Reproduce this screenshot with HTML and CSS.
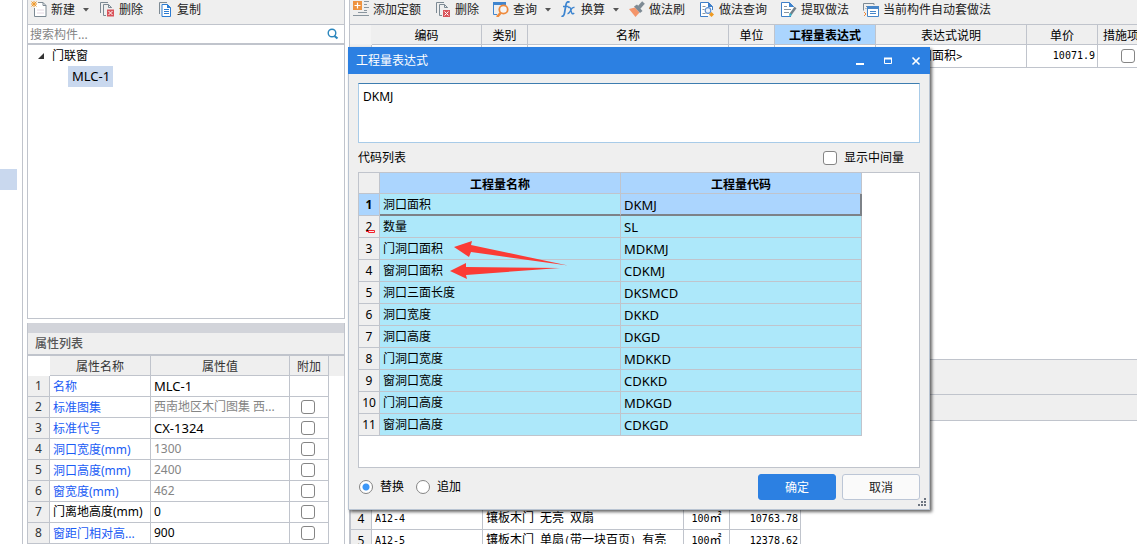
FILE: index.html
```html
<!DOCTYPE html>
<html lang="zh-CN">
<head>
<meta charset="utf-8">
<title>工程量表达式</title>
<link rel="stylesheet" href="styles.css">
</head>
<body>
<div class="app">
  <nav class="rail"><span class="rail-mark"></span></nav>

  <aside class="side">
    <section class="components">
      <div class="toolbar">
        <button class="tool has-menu" type="button">
          <svg class="icon" viewBox="0 0 16 16"><path d="M7 1.500h5l3 3v11H3.500V7" fill="#fff" stroke="#7d8a94"/><path d="M12 1.500v3h3" fill="none" stroke="#7d8a94"/><path d="M6 9h7M6 12h7" stroke="#e4d8e2"/><path d="M3 0v6M0 3h6M.500 .500l5 5M5.500 .500l-5 5" stroke="#f09a2c"/></svg>
          新建
          <svg class="caret" viewBox="0 0 6 4"><path d="M0 0h6L3 3.500z" fill="#555"/></svg>
        </button>
        <button class="tool" type="button">
          <svg class="icon" viewBox="0 0 16 16"><path d="M1.500 12V1.500H9" fill="none" stroke="#7d8a94"/><path d="M7 14.500H4.500v-11h5l3 3V7M9.500 3.500v3h3" fill="none" stroke="#7d8a94"/><path d="M8 8.500h7v7H8z" fill="#d9535a"/><path d="M9.500 10l4 4M13.500 10l-4 4" stroke="#fff"/></svg>
          删除
        </button>
        <button class="tool" type="button">
          <svg class="icon" viewBox="0 0 16 16"><path d="M2.500 13V1.500H10" fill="none" stroke="#7d8a94"/><path d="M5 3.500h5.500l3 3v9H5z" fill="#fff" stroke="#2c7cd2"/><path d="M10 3v4h4z" fill="#2c7cd2"/><path d="M7 8.500h5M7 10.500h5M7 12.500h5" stroke="#2c7cd2"/></svg>
          复制
        </button>
      </div>
      <div class="search">
        <input type="text" placeholder="搜索构件..." aria-label="搜索构件">
        <button type="button" aria-label="搜索"><svg viewBox="0 0 12 12"><circle cx="5" cy="5" r="3.800" fill="none" stroke="#2b86bd" stroke-width="1.400"/><path d="M7.500 8l3 2.500" stroke="#2b86bd" stroke-width="2.200"/></svg></button>
      </div>
      <ul class="tree">
        <li class="tree-parent"><svg class="twisty" viewBox="0 0 6 6"><path d="M6 0v6H0z" fill="#333"/></svg>门联窗</li>
        <li class="tree-child"><span class="selected latin">MLC-1</span></li>
      </ul>
    </section>

    <section class="props">
      <div class="splitter"></div>
      <h2 class="props-title">属性列表</h2>
      <div class="props-body">
      <table class="props-table">
        <colgroup><col class="c-num"><col class="c-name"><col class="c-value"><col class="c-extra"><col></colgroup>
        <thead><tr><th class="corner"></th><th>属性名称</th><th>属性值</th><th>附加</th><th class="rest"></th></tr></thead>
        <tbody>
          <tr><th>1</th><td class="link">名称</td><td class="latin">MLC-1</td><td></td><td class="rest"></td></tr>
          <tr><th>2</th><td class="link">标准图集</td><td class="muted">西南地区木门图集 西...</td><td class="tick"><input type="checkbox" aria-label="附加 标准图集"></td><td class="rest"></td></tr>
          <tr><th>3</th><td class="link">标准代号</td><td class="latin">CX-1324</td><td class="tick"><input type="checkbox" aria-label="附加 标准代号"></td><td class="rest"></td></tr>
          <tr><th>4</th><td class="link">洞口宽度(mm)</td><td class="muted">1300</td><td class="tick"><input type="checkbox" aria-label="附加 洞口宽度"></td><td class="rest"></td></tr>
          <tr><th>5</th><td class="link">洞口高度(mm)</td><td class="muted">2400</td><td class="tick"><input type="checkbox" aria-label="附加 洞口高度"></td><td class="rest"></td></tr>
          <tr><th>6</th><td class="link">窗宽度(mm)</td><td class="muted">462</td><td class="tick"><input type="checkbox" aria-label="附加 窗宽度"></td><td class="rest"></td></tr>
          <tr><th>7</th><td>门离地高度(mm)</td><td>0</td><td class="tick"><input type="checkbox" aria-label="附加 门离地高度"></td><td class="rest"></td></tr>
          <tr><th>8</th><td class="link">窗距门相对高...</td><td>900</td><td class="tick"><input type="checkbox" aria-label="附加 窗距门相对高"></td><td class="rest"></td></tr>
        </tbody>
      </table>
      </div>
    </section>
  </aside>

  <main class="main">
    <div class="toolbar">
      <button class="tool" type="button">
        <svg class="icon" viewBox="0 0 16 16"><path d="M0 0h9v9H0z" fill="#ee9340"/><path d="M4.500 1.500v6M1.500 4.500h6" stroke="#fff" stroke-width="1.200"/><path d="M11 .500h5M11 3.500h3M11 6.500h5M11 9.500h3M5 11.500h9M0 14.500h16" stroke="#8a969f"/></svg>
        添加定额
      </button>
      <button class="tool" type="button">
        <svg class="icon" viewBox="0 0 16 16"><path d="M1.500 12V1.500H9" fill="none" stroke="#7d8a94"/><path d="M7 14.500H4.500v-11h5l3 3V7M9.500 3.500v3h3" fill="none" stroke="#7d8a94"/><path d="M8 9h7v7H8z" fill="#d9535a"/><path d="M9.500 10.500l4 4M13.500 10.500l-4 4" stroke="#fff"/></svg>
        删除
      </button>
      <button class="tool has-menu" type="button">
        <svg class="icon" viewBox="0 0 16 16"><path d="M4 13.500H.500V2.500h12V4" fill="none" stroke="#3f85cf"/><path d="M0 1h13v3H0z" fill="#3f85cf"/><circle cx="10.500" cy="8.500" r="4.200" fill="#f4f4f4" stroke="#ee8a3c" stroke-width="1.800"/><path d="M7.500 12l-3.500 4" stroke="#ee8a3c" stroke-width="2.600"/></svg>
        查询
        <svg class="caret" viewBox="0 0 6 4"><path d="M0 0h6L3 3.500z" fill="#555"/></svg>
      </button>
      <button class="tool has-menu" type="button">
        <svg class="icon" viewBox="0 0 16 16"><path d="M8.500 1.500C7 0 5.500 1 5 3.500L3.500 12c-.500 3-1.800 3.800-3 2.800M2 5.500h5.500" fill="none" stroke="#3d85d0" stroke-width="1.700"/><path d="M7 6.500c2-1 2.500 .500 3 3s1.200 4.500 3.200 2.500M13.500 6.500c-2-.700-3 1-3.800 2.800S8 13 6.500 12.500" fill="none" stroke="#3d85d0" stroke-width="1.400"/></svg>
        换算
        <svg class="caret" viewBox="0 0 6 4"><path d="M0 0h6L3 3.500z" fill="#555"/></svg>
      </button>
      <button class="tool" type="button">
        <svg class="icon" viewBox="0 0 16 16"><path d="M0 8l6-1.500 4.500 5L6.500 16z" fill="#f4956a"/><path d="M5 5.500l3-2 5.500 6.500-2.500 2z" fill="#7d8a94"/><path d="M10 6.500l4.500-5" stroke="#7d8a94" stroke-width="3.600"/></svg>
        做法刷
      </button>
      <button class="tool" type="button">
        <svg class="icon" viewBox="0 0 16 16"><path d="M9 15.500H1.500v-14h8l4 4V9" fill="#fff" stroke="#3f7fc8"/><path d="M9 1v5h5z" fill="#3f7fc8"/><path d="M3.500 5.500h3M3.500 8.500h2M3.500 12.500h3" stroke="#8a969f"/><circle cx="9" cy="9.500" r="2.800" fill="#eef3fa" stroke="#5d8fcf" stroke-width="1.200"/><path d="M12.500 11l2.500 2.500-2.500 2.500-2.500-2.500z" fill="#ee9a22"/></svg>
        做法查询
      </button>
      <button class="tool" type="button">
        <svg class="icon" viewBox="0 0 16 16"><path d="M10 15.500H.500v-14h8l4 4V6" fill="#fff" stroke="#3f7fc8"/><path d="M8 1v5h5z" fill="#3f85cf"/><path d="M3 5.500h3M3 8.500h7M3 11.500h5" stroke="#8a969f"/><path d="M14.500 6.500L9 14" stroke="#71808b" stroke-width="2.500"/><path d="M9 12l2 2-3 1.500z" fill="#2dbbd0"/></svg>
        提取做法
      </button>
      <button class="tool" type="button">
        <svg class="icon" viewBox="0 0 16 16"><path d="M.500 9.500V2.500h10.500V4M3 5.500h1M2.500 7.500h1" fill="none" stroke="#7d8a94"/><path d="M4.500 6h11v9.500h-11z" fill="#fff" stroke="#4786c9"/><path d="M4 5h12v3H4z" fill="#4786c9"/><path d="M7 10.500h6M7 12.500h6" stroke="#4786c9"/><path d="M1 11l2 2-2 2" fill="none" stroke="#ee8a3c"/></svg>
        当前构件自动套做法
      </button>
    </div>

    <div class="sheet">
      <table class="quota">
        <colgroup><col class="q-num"><col class="q-code"><col class="q-kind"><col class="q-name"><col class="q-unit"><col class="q-expr"><col class="q-desc"><col class="q-price"><col class="q-measure"></colgroup>
        <thead><tr><th class="corner"></th><th>编码</th><th>类别</th><th>名称</th><th>单位</th><th class="current">工程量表达式</th><th>表达式说明</th><th>单价</th><th>措施项目</th></tr></thead>
        <tbody><tr><th></th><td></td><td></td><td></td><td></td><td></td><td><span class="mono">DKMJ&lt;</span>洞口面积<span class="mono">&gt;</span></td><td class="number mono">10071.9</td><td class="tick"><input type="checkbox" aria-label="措施项目"></td></tr></tbody>
      </table>
    </div>

    <div class="band"></div>
    <div class="band band-low"></div>

    <div class="lookup">
      <table class="norms">
        <colgroup><col class="n-num"><col class="n-code"><col class="n-name"><col class="n-unit"><col class="n-price"></colgroup>
        <thead><tr><th></th><th></th><th></th><th></th><th></th></tr></thead>
        <tbody>
          <tr><th></th><td></td><td></td><td></td><td></td></tr>
          <tr><th></th><td></td><td></td><td></td><td></td></tr>
          <tr><th></th><td></td><td></td><td></td><td></td></tr>
          <tr><th>4</th><td class="mono">A12-4</td><td>镶板木门<span class="mono"> </span>无亮<span class="mono"> </span>双扇</td><td class="unit"><span class="mono">100</span>㎡</td><td class="number mono">10763.78</td></tr>
          <tr><th>5</th><td class="mono">A12-5</td><td>镶板木门<span class="mono"> </span>单扇<span class="mono">(</span>带一块百页<span class="mono">) </span>有亮</td><td class="unit"><span class="mono">100</span>㎡</td><td class="number mono">12378.62</td></tr>
        </tbody>
      </table>
    </div>
  </main>
</div>

<div class="dialog" role="dialog" aria-labelledby="dialog-title">
  <header class="dialog-head">
    <h1 id="dialog-title">工程量表达式</h1>
    <button type="button" aria-label="最小化"><svg viewBox="0 0 10 10"><path d="M1 8h8" stroke="#fff" stroke-width="2"/></svg></button>
    <button type="button" aria-label="最大化"><svg viewBox="0 0 10 10"><path d="M1.500 2.500h7v5h-7z" fill="none" stroke="#fff"/><path d="M1 2.500h8" stroke="#fff" stroke-width="2"/></svg></button>
    <button type="button" aria-label="关闭"><svg viewBox="0 0 10 10"><path d="M1.500 1.500l7 7M8.500 1.500l-7 7" stroke="#fff" stroke-width="1.600"/></svg></button>
  </header>
  <div class="dialog-body">
    <textarea class="expression" aria-label="表达式">DKMJ</textarea>
    <div class="list-head">
      <span>代码列表</span>
      <label><input type="checkbox">显示中间量</label>
    </div>
    <div class="codes-box">
      <table class="codes">
        <colgroup><col class="k-num"><col class="k-name"><col class="k-code"></colgroup>
        <thead><tr><th class="corner"></th><th>工程量名称</th><th>工程量代码</th></tr></thead>
        <tbody>
          <tr class="active"><th>1</th><td>洞口面积</td><td class="latin">DKMJ</td></tr>
          <tr><th>2</th><td>数量</td><td class="latin">SL</td></tr>
          <tr><th>3</th><td>门洞口面积</td><td class="latin">MDKMJ</td></tr>
          <tr><th>4</th><td>窗洞口面积</td><td class="latin">CDKMJ</td></tr>
          <tr><th>5</th><td>洞口三面长度</td><td class="latin">DKSMCD</td></tr>
          <tr><th>6</th><td>洞口宽度</td><td class="latin">DKKD</td></tr>
          <tr><th>7</th><td>洞口高度</td><td class="latin">DKGD</td></tr>
          <tr><th>8</th><td>门洞口宽度</td><td class="latin">MDKKD</td></tr>
          <tr><th>9</th><td>窗洞口宽度</td><td class="latin">CDKKD</td></tr>
          <tr><th>10</th><td>门洞口高度</td><td class="latin">MDKGD</td></tr>
          <tr><th>11</th><td>窗洞口高度</td><td class="latin">CDKGD</td></tr>
        </tbody>
      </table>
      <svg class="marks" viewBox="0 0 220 60">
        <path d="M95 27L113 21L112 25L209 45.500L112 32L110 37Z" fill="#fb3b35"/>
        <path d="M91 51L107 43L107 47L201 48L107 55L108 59Z" fill="#fb3b35"/>
        <path d="M7 11.500h3M9.500 10.500h6v2h-6z" fill="none" stroke="#f3212d"/>
      </svg>
    </div>
    <footer class="dialog-foot">
      <label><input type="radio" name="mode" checked>替换</label>
      <label><input type="radio" name="mode">追加</label>
      <button class="btn primary" type="button">确定</button>
      <button class="btn" type="button">取消</button>
    </footer>
  </div>
  <svg class="grip" viewBox="0 0 8 8"><path d="M6 0h2v2H6zM3 3h2v2H3zM6 3h2v2H6zM0 6h2v2H0zM3 6h2v2H3zM6 6h2v2H6z" fill="#6d7580"/></svg>
</div>
</body>
</html>
```
FILE: styles.css
```css
* { box-sizing: border-box; }

:root {
  --line: #c0c4cc;
  --panel: #efefef;
  --pick: #abd5fe;
  --cyan: #ade8fa;
  --blue: #2c80e2;
}

body {
  margin: 0;
  height: 100vh;
  overflow: hidden;
  background: #fff;
  color: #000;
  font: 12px/18px "Noto Sans", "Noto Sans CJK SC", sans-serif;
}

button, input, textarea { font: inherit; color: inherit; }
button { border: 0; padding: 0; background: none; }
svg { display: block; flex: none; }

.latin { font-size: 13px; }
.mono { font-family: "DejaVu Sans Mono", monospace; font-size: 10px; white-space: pre; }

.app { display: flex; height: 100%; }

.rail {
  flex: none;
  width: 23px;
  padding-top: 169px;
  border-right: 1px solid var(--line);
}
.rail-mark { display: block; width: 17px; height: 21px; background: #c9d8ee; }

.side {
  flex: none;
  display: flex;
  flex-direction: column;
  gap: 4px;
  width: 318px;
  margin: 0 4px;
}

.toolbar {
  flex: none;
  display: flex;
  align-items: center;
  gap: 14px;
  height: 25px;
  padding: 0 3px 4px;
  background: var(--panel);
  border-bottom: 1px solid var(--line);
}
.tool { display: flex; align-items: center; flex: none; white-space: nowrap; color: #222; }
.has-menu { margin-right: -4px; }
.icon { width: 16px; height: 16px; margin: 0 4px 2px 0; }
.caret { width: 6px; height: 4px; margin-left: 8px; }

.components { display: flex; flex-direction: column; height: 319px; border: 1px solid var(--line); border-top: 0; }
.search { display: flex; align-items: center; height: 20px; border-bottom: 2px solid var(--line); }
.search input { flex: 1; min-width: 0; border: 0; padding: 1px 2px 0; outline: 0; background: none; }
.search input::placeholder { color: #858585; opacity: 1; }
.search svg { width: 12px; height: 12px; margin-right: 5px; }

.tree { margin: 0; padding: 0; list-style: none; line-height: 21px; }
.tree-parent { display: flex; align-items: center; padding-left: 10px; }
.twisty { width: 6px; height: 6px; margin-right: 8px; }
.tree-child { display: flex; padding-left: 40px; }
.selected { padding: 0 3px 0 4px; background: #c9d8ee; }

.props { flex: 1; min-height: 0; overflow: hidden; border: 1px solid var(--line); border-width: 0 1px; }
.splitter { height: 10px; background: #d2d4da; }
.props-title {
  margin: 0;
  height: 23px;
  padding: 0 7px;
  background: var(--panel);
  border-bottom: 2px solid var(--line);
  color: #555;
  font-size: 12px;
  font-weight: 500;
  line-height: 21px;
}

table { border-collapse: separate; border-spacing: 0; table-layout: fixed; }
th, td { padding: 0; font-weight: 400; white-space: nowrap; overflow: hidden; }
td { text-align: left; padding-left: 3px; border: 1px solid var(--line); border-width: 0 1px 1px 0; }
th { background: var(--panel); border: 1px solid var(--line); border-width: 0 1px 1px 0; }
thead th { padding-top: 2px; line-height: 17px; }

.tick { padding: 0; text-align: center; }
input[type="checkbox"] {
  appearance: none;
  display: block;
  flex: none;
  width: 14px;
  height: 14px;
  margin: 0 auto;
  border: 1px solid #858585;
  border-radius: 3px;
  background: #fff;
}

.props-table { width: 100%; color: #000; }
.props-table tr { height: 21px; }
.props-table thead tr { height: 20px; }
.props-table th { color: #333; }
.props-table .link { padding-top: 2px; }
.props-table .tick { padding-right: 2px; }
.props-table .corner { background: #fff; border-color: #fff; }
.props-table td.rest { border: 0; }
.props-table th.rest { border-color: var(--panel); }
.c-num { width: 22px; }
.c-name { width: 101px; }
.c-value { width: 139px; }
.c-extra { width: 39px; }
.link { color: #1a5cf5; }
.muted { color: #858585; }

.main { flex: 1; min-width: 0; display: flex; flex-direction: column; border-left: 1px solid var(--line); overflow: hidden; }
.sheet { height: 334px; overflow: hidden; }
.quota { width: 807px; }
.quota thead tr { height: 20px; }
.quota tbody tr { height: 23px; }
.quota td { padding-left: 2px; }
.quota .corner { background: #f4f4f4; border-color: var(--panel); }
.quota .current { background: var(--pick); font-weight: 700; }
.q-num { width: 22px; }
.q-code { width: 110px; }
.q-kind, .q-unit { width: 46px; }
.q-name { width: 201px; }
.q-expr { width: 101px; }
.q-desc { width: 151px; }
.q-price { width: 71px; }
.q-measure { width: 59px; }
td.number { padding: 0 2px 0 0; text-align: right; }

.band { flex: none; height: 35px; background: var(--panel); border-top: 1px solid var(--line); }
.band-low { height: 27px; border-bottom: 1px solid var(--line); }

.lookup { flex: 1; min-height: 0; overflow: hidden; border-left: 1px solid var(--line); }
.norms { width: 450px; }
.norms tr { height: 22px; }
.norms thead tr { height: 21px; }
.n-num { width: 21px; }
.n-code { width: 111px; }
.n-name { width: 201px; }
.n-unit { width: 46px; }
.n-price { width: 71px; }
td.unit { padding: 0; text-align: center; }

.dialog {
  position: absolute;
  left: 348px;
  top: 47px;
  width: 582px;
  background: var(--panel);
  box-shadow: 2px 2px 3px rgba(0, 0, 0, 0.6);
}
.dialog-head { display: flex; align-items: center; gap: 18px; height: 27px; padding: 0 9px 0 8px; background: var(--blue); color: #fff; }
.dialog-head h1 { flex: 1; margin: 0; font-size: 12px; font-weight: 400; }
.dialog-head svg { width: 10px; height: 10px; }
.dialog-body { padding: 9px; border: 1px solid #b9c4d2; border-top: 0; }
.expression {
  display: block;
  width: 100%;
  height: 60px;
  padding: 4px;
  border: 1px solid #a8cbe8;
  border-top-color: #3d7db0;
  background: #fff;
  outline: 0;
  resize: none;
}
.list-head { display: flex; justify-content: space-between; align-items: center; height: 29px; padding-right: 16px; }
.list-head label { display: flex; align-items: center; gap: 7px; }

.codes-box { position: relative; min-height: 296px; border: 1px solid var(--line); background: #fff; }
.codes { width: 503px; }
.codes tr { height: 22px; }
.codes thead tr { height: 21px; }
.codes thead th { background: var(--pick); font-weight: 700; }
.codes thead th.corner { background: var(--panel); }
.codes td { background: var(--cyan); }
.codes tbody th { padding-top: 1px; }
.codes .active th { background: var(--pick); font-weight: 700; }
.codes .active td { border-bottom: 2px solid #7d8288; padding-top: 1px; }
.codes .active td:last-child { background: var(--pick); border-right: 2px solid #7d8288; }
.k-num { width: 21px; }
.k-name, .k-code { width: 241px; }
.marks { position: absolute; left: 0; top: 47px; width: 220px; height: 60px; pointer-events: none; }

.dialog-foot { display: flex; align-items: center; gap: 6px; padding: 6px 0 0 1px; }
.dialog-foot label { display: flex; align-items: center; gap: 7px; margin-right: 6px; }
input[type="radio"] { appearance: none; width: 14px; height: 14px; margin: 0; border: 1px solid #858585; border-radius: 50%; background: #fff; }
input[type="radio"]:checked { background: radial-gradient(circle, #3d97f7 3px, #fff 4px); }
.dialog-foot .primary { margin-left: auto; border-color: var(--blue); background: var(--blue); color: #fff; }
.btn { width: 78px; height: 26px; padding-top: 1px; border: 1px solid #bcc6d6; border-radius: 3px; background: #fafafa; color: #222; }
.grip { position: absolute; right: 4px; bottom: 4px; width: 8px; height: 8px; }
```
